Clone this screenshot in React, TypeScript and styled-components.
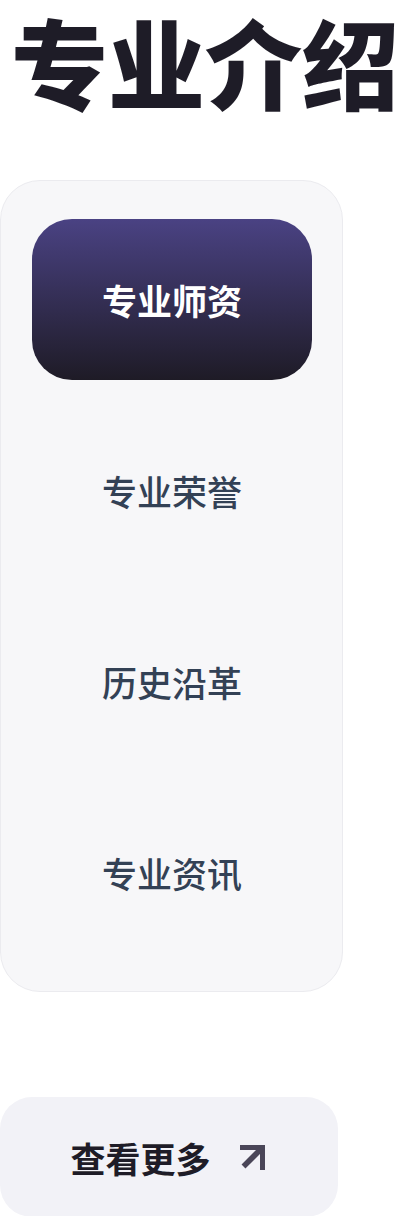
import React, { useState } from "react";
import styled, { createGlobalStyle } from "styled-components";

const Global = createGlobalStyle`
  html, body { margin: 0; padding: 0; background: #ffffff; }
  body { font-family: "Noto Sans CJK SC", "Noto Sans", sans-serif; }
`;

const Page = styled.div`
  width: 410px;
  display: flex;
  flex-direction: column;
  align-items: flex-start;
`;

const Title = styled.h1`
  margin: -10px 0 0 0;
  padding: 0;
  width: 410px;
  text-align: center;
  font-size: 97px;
  line-height: 140px;
  font-weight: 900;
  color: #1e1c27;
  white-space: nowrap;
  letter-spacing: 0;
`;

const Panel = styled.nav`
  box-sizing: border-box;
  margin-top: 50px;
  width: 343px;
  padding: 38px 31px;
  background: #f7f7f9;
  border: 1px solid #ebebef;
  border-radius: 40px;
  display: flex;
  flex-direction: column;
  gap: 30px;
`;

const Tab = styled.button<{ $active: boolean }>`
  height: 161px;
  width: 280px;
  border: none;
  border-radius: 40px;
  display: flex;
  align-items: center;
  justify-content: center;
  font-family: "Noto Sans CJK SC", sans-serif;
  font-size: 35px;
  font-weight: ${(p) => (p.$active ? 700 : 500)};
  color: ${(p) => (p.$active ? "#ffffff" : "#334155")};
  background: ${(p) =>
    p.$active ? "linear-gradient(180deg, #4a4283 0%, #1e1b26 100%)" : "transparent"};
  cursor: pointer;
  padding: 0;
`;

const MoreButton = styled.button`
  box-sizing: border-box;
  margin-top: 105px;
  width: 338px;
  height: 120px;
  border: none;
  border-radius: 32px;
  background: #f2f2f7;
  display: flex;
  align-items: center;
  justify-content: center;
  gap: 27px;
  font-family: "Noto Sans CJK SC", sans-serif;
  font-size: 35px;
  font-weight: 700;
  color: #1e1c27;
  padding: 0;
  cursor: pointer;
`;

const Arrow = () => (
  <svg width="30" height="30" viewBox="0 0 30 30" fill="none">
    <path d="M4.5 5.5 H24.5 V25.5" stroke="#4a4658" strokeWidth="5" strokeLinecap="square" />
    <path d="M24 6 L5.5 24.5" stroke="#4a4658" strokeWidth="5.5" strokeLinecap="butt" />
  </svg>
);

const tabs = ["专业师资", "专业荣誉", "历史沿革", "专业资讯"];

export default function App() {
  const [active, setActive] = useState(0);
  return (
    <>
      <Global />
      <Page>
        <Title>专业介绍</Title>
        <Panel>
          {tabs.map((t, i) => (
            <Tab key={t} $active={i === active} onClick={() => setActive(i)}>
              {t}
            </Tab>
          ))}
        </Panel>
        <MoreButton>
          <span>查看更多</span>
          <Arrow />
        </MoreButton>
      </Page>
    </>
  );
}
